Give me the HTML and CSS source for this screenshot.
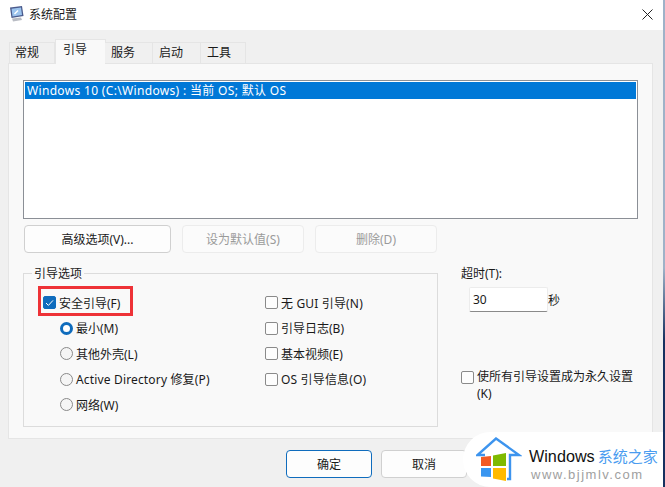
FILE: index.html
```html
<!DOCTYPE html>
<html lang="zh-CN">
<head>
<meta charset="utf-8">
<title>系统配置</title>
<link rel="stylesheet" href="styles.css">
</head>
<body>
<div class="window">
  <header class="titlebar">
    <svg class="app-icon" width="15" height="16" viewBox="0 0 15 16">
      <path d="M1 1.5 L13 0 L14.5 10 L2.5 12 Z" fill="#4a5a8c"/>
      <path d="M2.5 2.8 L12 1.6 L13 9 L3.5 10.5 Z" fill="#9cc4ee"/>
      <path d="M5 7.5 L8.5 4 L9.5 5 L6 8.5 Z" fill="#fff"/>
      <path d="M3 12.5 L12 11.5 L13 14 L4 15.5 Z" fill="#b9bcc4"/>
    </svg>
    <span class="title">系统配置</span>
    <svg class="close" width="11" height="11" viewBox="0 0 11 11"><path d="M.5.5l10 10M10.5.5l-10 10" stroke="#222" stroke-width="1" fill="none"/></svg>
  </header>
  <main class="client">
    <nav class="tabs">
      <span class="tab first">常规</span>
      <span class="tab active">引导</span>
      <span class="tab">服务</span>
      <span class="tab">启动</span>
      <span class="tab last">工具</span>
    </nav>
    <section class="panel">
      <div class="listbox"><div class="list-row">Windows 10 (C:\Windows) : 当前 OS; 默认 OS</div></div>
      <div class="btn-row">
        <button class="btn">高级选项(V)...</button>
        <button class="btn disabled">设为默认值(S)</button>
        <button class="btn disabled">删除(D)</button>
      </div>
      <div class="options">
        <fieldset class="group">
          <legend>引导选项</legend>
          <div class="col-left">
            <div class="item highlighted"><span class="check on"><svg width="9" height="8" viewBox="0 0 9 8"><path d="M1 4l2.4 2.4L8 1.4" stroke="#fff" stroke-width="1" fill="none"/></svg></span>安全引导(F)</div>
            <div class="item sub"><span class="radio on"></span>最小(M)</div>
            <div class="item sub"><span class="radio"></span>其他外壳(L)</div>
            <div class="item sub wide"><span class="radio"></span>Active Directory 修复(P)</div>
            <div class="item sub"><span class="radio"></span>网络(W)</div>
          </div>
          <div class="col-right">
            <div class="item wide"><span class="check"></span>无 GUI 引导(N)</div>
            <div class="item"><span class="check"></span>引导日志(B)</div>
            <div class="item"><span class="check"></span>基本视频(E)</div>
            <div class="item wide"><span class="check"></span>OS 引导信息(O)</div>
          </div>
        </fieldset>
        <aside class="side">
          <div class="timeout-label">超时(T):</div>
          <div class="timeout-row"><span class="input">30</span><span>秒</span></div>
          <div class="persist"><span class="check"></span><span>使所有引导设置成为永久设置(K)</span></div>
        </aside>
      </div>
    </section>
    <footer class="footer">
      <button class="btn dlg primary">确定</button>
      <button class="btn dlg">取消</button>
    </footer>
  </main>
  <div class="watermark">
    <svg class="logo" width="46" height="46" viewBox="0 0 46 46">
      <path d="M9 18 H1.5 L20 1.5 L43 18 H34 V42 H31" stroke="#3d94ee" stroke-width="2.4" fill="none"/>
      <path d="M5 20 L15 19 V29 H5 Z" fill="#f25a24"/>
      <path d="M17 18.5 L30 16 V29 H17 Z" fill="#7fba00"/>
      <path d="M5 31 H15 V40 L5 39.5 Z" fill="#3a96f0"/>
      <path d="M17 31 H30 V44 L17 41.5 Z" fill="#ffba00"/>
    </svg>
    <div class="wm-text">
      <div class="wm-top"><span class="wm-win">Windows</span><span class="wm-cn">系统之家</span></div>
      <div class="wm-url">www.bjjmlv.com</div>
    </div>
  </div>
</div>
</body>
</html>
```
FILE: styles.css
```css
html, body { margin: 0; padding: 0; }
body { width: 665px; height: 487px; overflow: hidden; background: #fff; }
* { box-sizing: border-box; }
.window {
  position: relative;
  width: 665px; height: 487px;
  display: flex; flex-direction: column;
  font-family: "Noto Sans", "Noto Sans CJK SC", sans-serif;
  font-size: 12px; color: #1a1a1a;
  border-right: 2px solid;
  border-image: linear-gradient(#9fb2c8 0, #9fb2c8 55%, #16305f 70%, #16305f 100%) 1;
  overflow: hidden;
}
.titlebar { height: 30px; flex: none; background: #fff; display: flex; align-items: center; padding: 0 10px 2px 9px; }
.app-icon { margin-right: 5px; }
.title { flex: 1; }
.client { flex: 1; background: #f0f0f0; padding: 10px 10px 0 8px; display: flex; flex-direction: column; }
.tabs { display: flex; height: 23px; padding-left: 1px; position: relative; z-index: 1; }
.tab { width: 48px; margin-top: 2px; height: 21px; background: #f0f0f0; border: 1px solid #e5e5e5; border-left: none; border-bottom: none; padding-left: 6px; line-height: 20px; }
.tab.first { width: 46px; border-left: 1px solid #e5e5e5; padding-left: 5px; }
.tab.last { width: 45px; }
.tab.active { width: 51px; margin-top: -1px; height: 25px; background: #f9f9f9; border-left: 1px solid #e5e5e5; line-height: 20px; padding-left: 7px; margin-right: -1px; }
.panel { height: 376px; flex: none; background: #f9f9f9; border: 1px solid #e5e5e5; padding: 16px 14px 0 14px; display: flex; flex-direction: column; }
.listbox { height: 139px; flex: none; background: #fff; border: 1px solid #8b8f96; padding: 1px; }
.list-row { height: 17px; background: #0078d7; color: #fff; line-height: 17px; padding-left: 2px; letter-spacing: .33px; }
.btn-row { display: flex; gap: 11px; margin: 6px 0 0 1px; }
.btn { font: inherit; color: #1a1a1a; width: 147px; height: 28px; background: #fdfdfd; border: 1px solid #d0d0d0; border-radius: 4px; padding: 0; }
.btn.disabled { color: #9a9a9a; background: #fbfbfb; border-color: #ececec; width: 122px; }
.options { display: flex; margin-top: 20px; }
.group { position: relative; flex: none; width: 415px; height: 154px; margin: 0; padding: 0; border: 1px solid #dcdcdc; display: flex; }
.group legend { position: absolute; top: -9px; left: 8px; padding: 0 2px; background: #f9f9f9; line-height: 17px; }
.col-left { width: 241px; padding: 20px 0 0 19px; }
.col-right { padding: 20px 0 0 0; }
.item { display: flex; align-items: center; height: 17px; margin-bottom: 8.6px; white-space: nowrap; }
.item.sub { padding-left: 17px; }
.item.wide { letter-spacing: .16px; }
.highlighted { position: relative; }
.highlighted::after { content: ""; position: absolute; box-sizing: border-box; left: -5px; top: -8px; width: 95px; height: 30px; border: 3px solid #ee3237; }
.check { flex: none; width: 13px; height: 13px; border: 1px solid #8a8a8a; border-radius: 2px; background: #fdfdfd; margin-right: 3px; display: inline-flex; align-items: center; justify-content: center; }
.check.on { background: #0f6cbd; border-color: #0f6cbd; }
.radio { flex: none; width: 13px; height: 13px; border: 1px solid #8a8a8a; border-radius: 50%; background: #f5f5f5; margin-right: 3px; }
.radio.on { border: 3px solid #0f6cbd; background: #fff; }
.side { margin-left: 23px; width: 176px; display: flex; flex-direction: column; }
.timeout-label { line-height: 16px; margin-top: -7px; }
.timeout-row { display: flex; align-items: center; margin-top: 5px; margin-left: 8px; }
.input { width: 79px; height: 25px; background: #fff; border: 1px solid #ececec; border-bottom-color: #8a8a8a; border-radius: 2px; padding-left: 3px; line-height: 23px; }
.persist { display: flex; align-items: flex-start; margin-top: 56px; line-height: 17px; }
.persist .check { margin-top: 3px; }
.footer { display: flex; gap: 9px; padding: 11px 0 0 278px; }
.btn.dlg { width: 86px; height: 28px; }
.btn.primary { border-color: #0f6cbd; }
.watermark { position: absolute; left: 463px; top: 432px; width: 210px; height: 55px; background: #fff; border-radius: 28px 0 0 28px; display: flex; padding: 5px 0 0 13px; }
.logo { flex: none; }
.wm-text { margin-left: 7px; margin-top: 9px; }
.wm-top { line-height: 20px; white-space: nowrap; display: flex; align-items: center; }
.wm-win { font-family: "Liberation Sans", sans-serif; font-size: 16.2px; color: #111; }
.wm-cn { color: #4a9cf0; font-size: 15px; margin-left: 3px; }
.wm-url { font-family: "Liberation Sans", sans-serif; color: #a0a0a0; font-size: 13px; letter-spacing: 1.5px; line-height: 15px; margin: 1px 0 0 2px; }
```
